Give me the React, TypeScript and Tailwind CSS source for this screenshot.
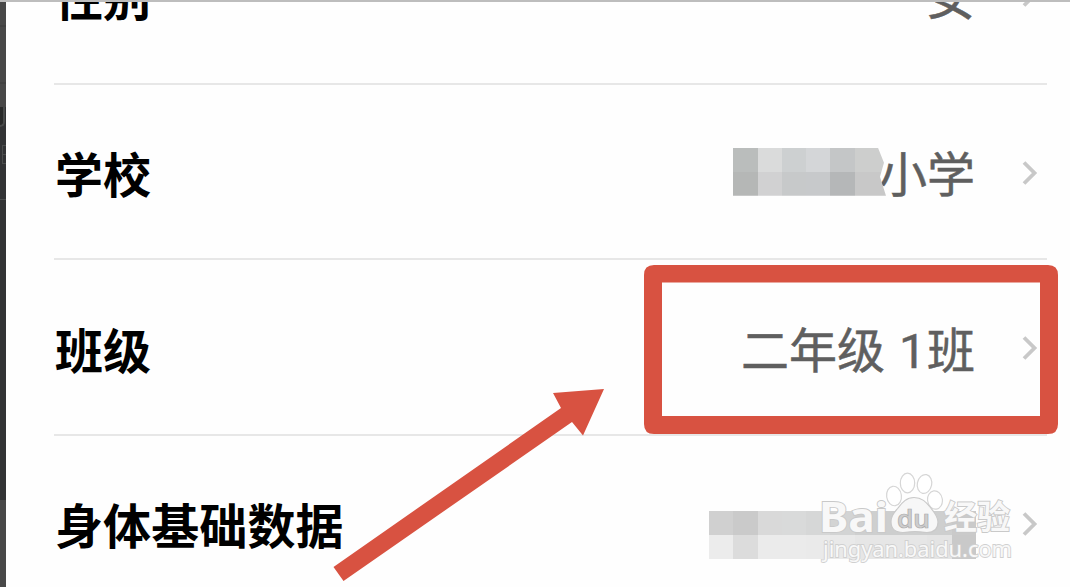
import type { ReactNode } from "react";

const topMosaic = [
  "bg-[#babdbc]", "bg-[#dadbdb]", "bg-[#cdd0d1]", "bg-[#d4d6d8]", "bg-[#c4c6c7]", "bg-[#cdcecd]",
  "bg-[#b5b7b6]", "bg-[#d1d1d2]", "bg-[#c7c9ca]", "bg-[#c7c9cb]", "bg-[#b5b7b8]", "bg-[#c8c8c8]",
];

const bottomMosaic = [
  "bg-[#d0d0d0]", "bg-[#cacaca]", "bg-[#d9d9d9]", "bg-[#d9dada]", "bg-[#d6d7d7]", "bg-[#d3d4d4]",
  "bg-[#cecfcf]", "bg-[#cdcece]", "bg-[#cecfcf]", "bg-[#cecfcf]", "bg-[#cacaca]",
  "bg-[#ececec]", "bg-[#dcdcdc]", "bg-[#ebebeb]", "bg-[#ebebeb]", "bg-[#eaeaea]", "bg-[#e9e9e9]",
  "bg-[#e6e6e6]", "bg-[#e6e6e6]", "bg-[#e6e6e6]", "bg-[#e4e4e4]", "bg-[#c9c9c9]",
];

function Chevron() {
  return (
    <svg className="mt-[3px] mr-[9px] ml-[47px] h-[24px] w-[16px] shrink-0" viewBox="0 0 16 24" fill="none">
      <path d="M2 1.500 L12.500 12 L2 22.500" stroke="#c8c8c8" strokeWidth="3.8" />
    </svg>
  );
}

function Row({ label, className = "", children }: { label: string; className?: string; children: ReactNode }) {
  return (
    <div className={`flex h-[175.5px] items-center border-b-2 border-[#e7e7e7] ${className}`}>
      <div className="mt-[2px] ml-[1px] flex-1 text-[48px] leading-[60px] font-bold tracking-[0.1px] whitespace-nowrap text-black">{label}</div>
      <div className="flex items-center text-[48px] leading-[60px] whitespace-nowrap text-[#5f5f5f] [-webkit-text-stroke:0.5px_#5f5f5f]">{children}</div>
      <Chevron />
    </div>
  );
}

function Watermark() {
  return (
    <svg className="absolute left-[810px] top-[465px]" width="215" height="105" viewBox="810 465 215 105">
      <g fill="#fff" stroke="#d6d6d6" strokeWidth="1.2">
        <ellipse cx="894" cy="496" rx="7.4" ry="9.8" transform="rotate(-8 894 496)" />
        <ellipse cx="907.5" cy="483" rx="7.2" ry="9.8" />
        <ellipse cx="924.5" cy="484" rx="7.2" ry="9.5" transform="rotate(12 924.5 484)" />
        <ellipse cx="935" cy="500" rx="7.4" ry="9.2" transform="rotate(-8 935 500)" />
        <path d="M914 497.500 C906 497.500 902 503 898 508 C894 513 891 516 891 522 C891 529 896 532.500 903 532.500 C908 532.500 911 531.500 915 531.500 C919 531.500 922 532.500 927 532.500 C934 532.500 938 529 938 522 C938 516 934 512 930 507 C926 502 922 497.500 914 497.500 Z" fill="#f7f7f7" stroke="#c9c9c9" />
      </g>
      <g fill="#f8f8f8" stroke="#c9c9c9" strokeWidth="1.8" paintOrder="stroke">
        <text x="819" y="532" fontFamily="Noto Sans, sans-serif" fontSize="42" fontWeight="700" textLength="69" lengthAdjust="spacingAndGlyphs">Bai</text>
        <text x="944" y="529" fontFamily="Noto Sans CJK SC, sans-serif" fontSize="33" fontWeight="700" textLength="66" lengthAdjust="spacingAndGlyphs">经验</text>
        <text x="823" y="557" fontFamily="Noto Sans, sans-serif" fontSize="22.5" textLength="189" stroke="#d0d0d0" lengthAdjust="spacingAndGlyphs">jingyan.baidu.com</text>
      </g>
      <text x="897" y="527.5" fontFamily="Noto Sans, sans-serif" fontSize="26" fontWeight="600" textLength="33" lengthAdjust="spacingAndGlyphs" fill="#cecece" stroke="#ababab" strokeWidth=".7">du</text>
    </svg>
  );
}

export default function App() {
  return (
    <div className="relative flex h-[587px] w-[1070px] flex-col overflow-hidden bg-[#fefefe] font-['Noto_Sans_CJK_SC',sans-serif]">
      <div className="h-[2px] shrink-0 bg-[#bdbdbd]" />
      <div className="flex min-h-0 flex-1">
        <div className="flex w-[6px] shrink-0 flex-col overflow-hidden bg-[#484848]">
          <div className="mt-[23px] h-[2px] shrink-0 bg-[#414141]" />
          <div className="mt-[55px] h-[2px] shrink-0 bg-[#414141]" />
          <div className="mt-[23px] h-[393px] shrink-0 bg-[#323335]">
            <div className="h-[20px] w-[5px] rounded-br-[5px] border-r-2 border-b-2 border-[#484a4a] bg-[#282929]" />
            <div className="mt-[18px] ml-[2px] flex h-[19px] flex-col justify-between border-l border-[#4b4d4d]">
              <div className="h-px bg-[#4b4d4d]" />
              <div className="h-px bg-[#4b4d4d]" />
              <div className="h-px bg-[#4b4d4d]" />
            </div>
            <div className="mt-[35px] h-px bg-[#4b4d4d]" />
          </div>
        </div>
        <div className="min-w-0 flex-1 overflow-hidden pr-[23px] pl-[48px]">
          <div className="-mt-[93px]">
            <Row label="性别" className="pb-[4px]">女</Row>
            <Row label="学校">
              <div className="mt-px mr-[-7px] grid h-[48px] w-[153px] grid-cols-[25px_24px_24px_24px_25px_31px] grid-rows-2 [clip-path:polygon(0_0,145px_0,151px_15px,147px_29px,153px_48px,0_48px)]">
                {topMosaic.map((color, i) => <div key={i} className={color} />)}
              </div>
              <span>小学</span>
            </Row>
            <Row label="班级"><span className="mt-[6px]">二年级<span className="mr-[1px] ml-[2px] font-['Roboto','Noto_Sans_CJK_SC',sans-serif]"> 1</span>班</span></Row>
            <Row label="身体基础数据">
              <div className="mt-[25px] mr-[-1px] grid h-[48px] w-[267px] grid-cols-11 grid-rows-2">
                {bottomMosaic.map((color, i) => <div key={i} className={color} />)}
              </div>
            </Row>
          </div>
        </div>
      </div>
      <div className="absolute top-[265px] left-[644px] h-[169px] w-[414px] rounded-[10px] bg-transparent">
        <svg className="h-full w-full" viewBox="0 0 414 169">
          <path fill="#d85241" fillRule="evenodd" d="M10 0H404Q414 0 414 10V159Q414 169 404 169H10Q0 169 0 159V10Q0 0 10 0ZM18 17.5V151H396V17.5Z" />
        </svg>
      </div>
      <svg className="absolute top-[380px] left-[325px]" width="290" height="207" viewBox="325 380 290 207">
        <path fill="#d85241" d="M333.5 567 L561 408 L553 393 L604 389 L583 435.5 L572 422 L343.500 581 Z" />
      </svg>
      <Watermark />
    </div>
  );
}
